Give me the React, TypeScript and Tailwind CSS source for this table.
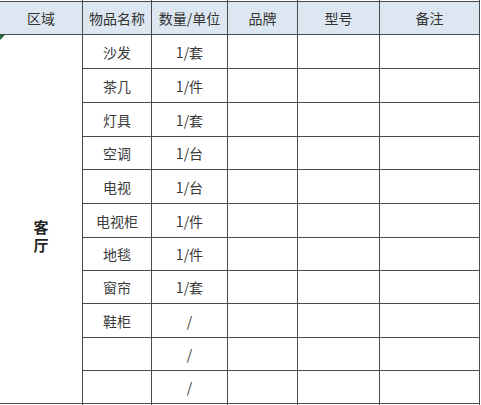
import React from "react";

const headers = ["区域", "物品名称", "数量/单位", "品牌", "型号", "备注"];
const items: [string, string][] = [
  ["沙发", "1/套"],
  ["茶几", "1/件"],
  ["灯具", "1/套"],
  ["空调", "1/台"],
  ["电视", "1/台"],
  ["电视柜", "1/件"],
  ["地毯", "1/件"],
  ["窗帘", "1/套"],
  ["鞋柜", "/"],
  ["", "/"],
  ["", "/"],
];

export default function App() {
  return (
    <div className="w-[481px] h-[405px] bg-white overflow-hidden font-['Noto_Sans_CJK_SC','Noto_Sans',sans-serif]">
      <div className="grid w-[480px] gap-px bg-[#4a4a4a] pr-px text-[14px] text-[#333] grid-cols-[82px_68px_75px_69px_81px_99px] grid-rows-[1px_32px_33px_33px_33px_32px_33px_33px_32px_32px_33px_32px_32px_20px]">
        {headers.map((h) => (
          <div key={"t" + h} className="bg-white" />
        ))}
        {headers.map((h) => (
          <div key={h} className="bg-[#dde7f1] flex items-center justify-center leading-none">
            {h}
          </div>
        ))}
        <div className="relative col-start-1 row-start-3 row-span-11 bg-white flex flex-col items-center justify-center pt-[34px] font-bold text-[15px] leading-[18px] text-[#222]">
          <span>客</span>
          <span>厅</span>
          <div className="absolute left-0 top-0 w-0 h-0 border-t-[5px] border-t-[#1d6b34] border-r-[5px] border-r-transparent" />
        </div>
        {items.map(([name, qty], r) => (
          <React.Fragment key={r}>
            <div className="bg-white flex items-center justify-center leading-none text-[#3a3a3a]">{name}</div>
            <div className="bg-white flex items-center justify-center leading-none text-[#3a3a3a]">{qty}</div>
            <div className="bg-white" />
            <div className="bg-white" />
            <div className="bg-white" />
          </React.Fragment>
        ))}
        {headers.map((h) => (
          <div key={"b" + h} className="bg-white" />
        ))}
      </div>
    </div>
  );
}
